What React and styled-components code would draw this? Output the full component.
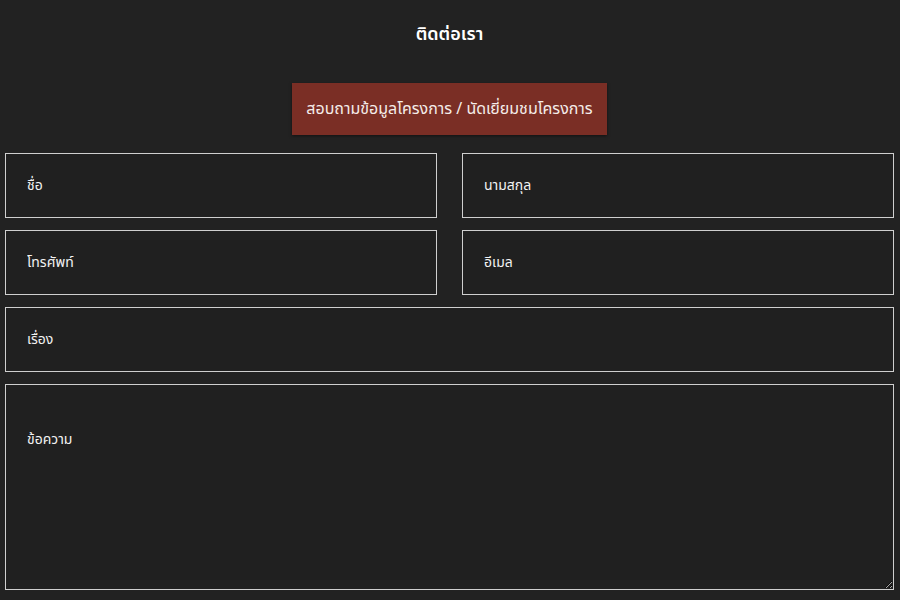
import React from 'react'
import styled, { createGlobalStyle } from 'styled-components'

const GlobalStyle = createGlobalStyle`
  html, body {
    margin: 0;
    padding: 0;
    background: #222222;
    font-family: "Noto Sans Thai", "Noto Sans", "Liberation Sans", sans-serif;
  }
`

const Page = styled.div`
  width: 900px;
  height: 600px;
  box-sizing: border-box;
  padding: 0 6px 0 5px;
  display: flex;
  flex-direction: column;
  align-items: center;
  overflow: hidden;
`

const Title = styled.h2`
  margin: 20px 0 0;
  height: 30px;
  line-height: 30px;
  font-size: 18px;
  font-weight: 600;
  color: #fff;
`

const Badge = styled.div`
  margin-top: 33px;
  width: 315px;
  height: 52px;
  background: #7a2e25;
  color: #f4ece9;
  font-size: 16px;
  white-space: nowrap;
  display: flex;
  align-items: center;
  justify-content: center;
  box-shadow: 0 1px 3px rgba(0, 0, 0, .5);
`

const Form = styled.form`
  margin-top: 18px;
  width: 100%;
  display: grid;
  grid-template-columns: 1fr 1fr;
  column-gap: 25px;
  row-gap: 12px;
`

const Field = styled.input`
  grid-column: ${p => (p.$wide ? '1 / -1' : 'auto')};
  box-sizing: border-box;
  height: 65px;
  padding: 0 21px;
  background: #202020;
  border: 1px solid #cfcfcf;
  color: #fff;
  font-family: inherit;
  font-size: 14px;
  outline: none;
  &::placeholder {
    color: #f2f2f2;
    opacity: 1;
  }
`

const Message = styled.textarea`
  grid-column: 1 / -1;
  box-sizing: border-box;
  height: 206px;
  padding: 44px 21px 10px;
  background: #202020;
  border: 1px solid #cfcfcf;
  color: #fff;
  font-family: inherit;
  font-size: 14px;
  outline: none;
  &::placeholder {
    color: #f2f2f2;
    opacity: 1;
  }
`

export default function App() {
  return (
    <>
      <GlobalStyle />
      <Page>
        <Title>ติดต่อเรา</Title>
        <Badge>สอบถามข้อมูลโครงการ / นัดเยี่ยมชมโครงการ</Badge>
        <Form>
          <Field placeholder="ชื่อ" />
          <Field placeholder="นามสกุล" />
          <Field placeholder="โทรศัพท์" />
          <Field placeholder="อีเมล" />
          <Field $wide placeholder="เรื่อง" />
          <Message placeholder="ข้อความ" />
        </Form>
      </Page>
    </>
  )
}
